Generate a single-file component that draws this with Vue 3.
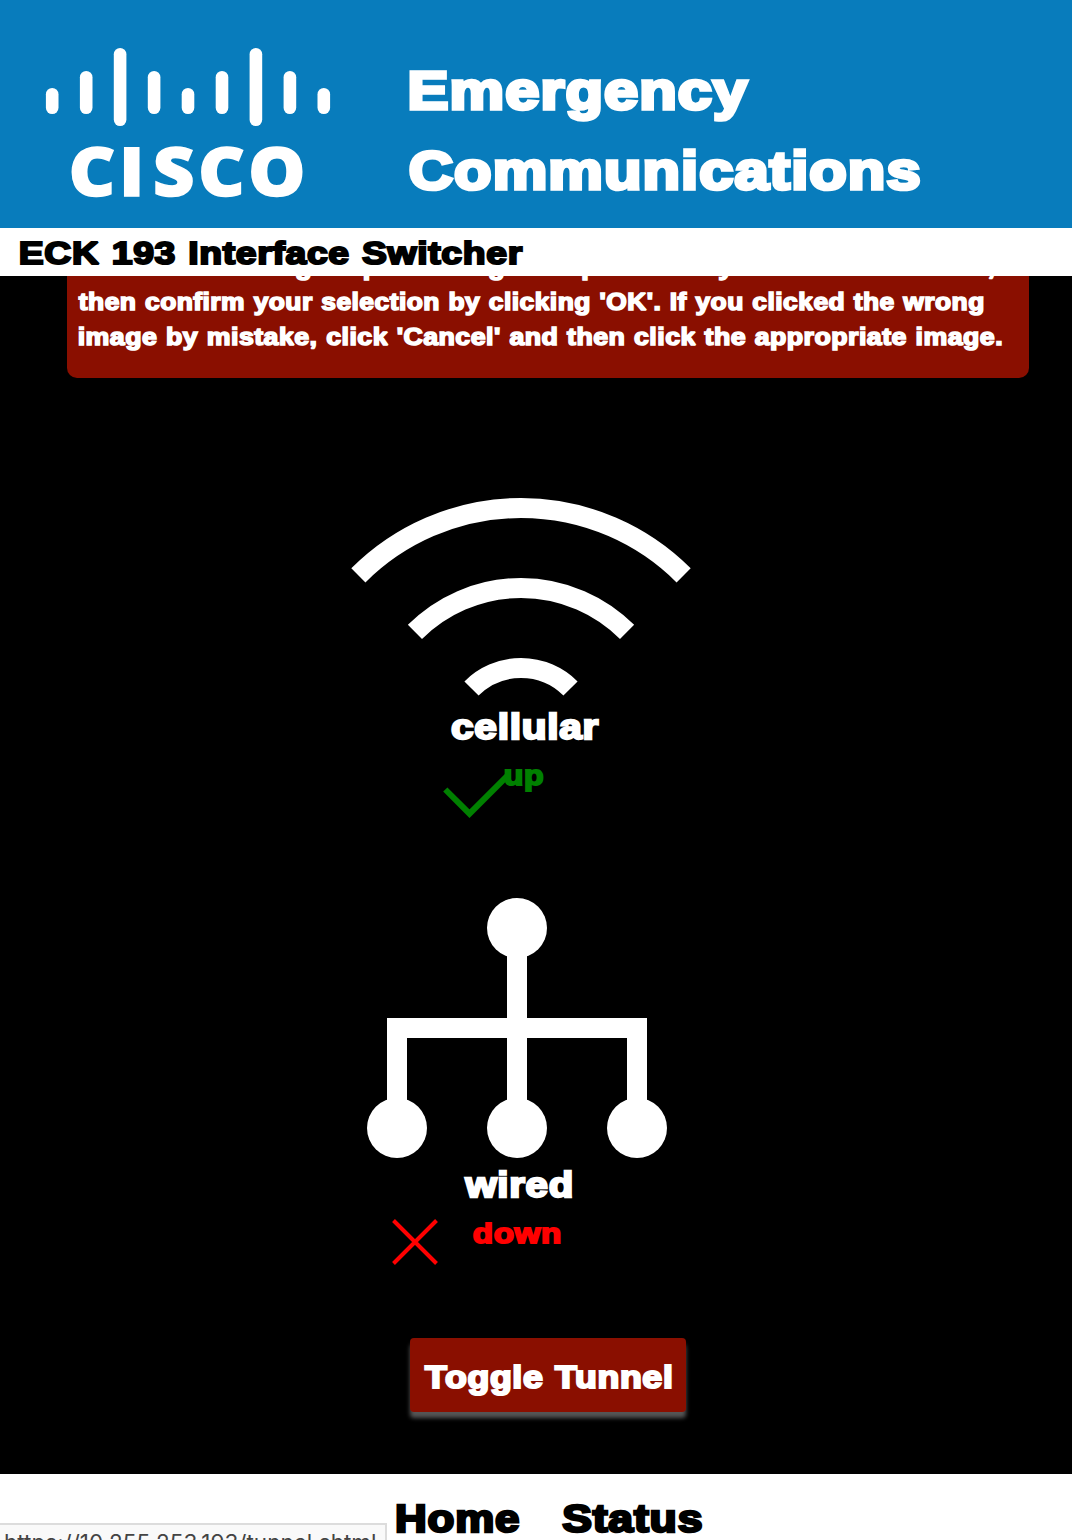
<script setup>
import { h } from 'vue'

const pen = document.createElement('canvas').getContext('2d')

// A line of extra-heavy display text, stretched so its ink spans `width` pixels.
// `size` is the nominal em, `base` the baseline inside a box `height` tall.
function HeavyText({ text, size, width, height, base }) {
  const stroke = size * 0.068
  const em = size * 0.948
  const tracking = em * 0.018
  const wordGap = em * 0.03
  pen.font = `bold ${em}px "Liberation Sans", Arial, sans-serif`
  pen.letterSpacing = `${tracking}px`
  pen.wordSpacing = `${wordGap}px`
  const m = pen.measureText(text)
  const scale = (width - stroke) / (m.actualBoundingBoxLeft + m.actualBoundingBoxRight)
  const x = stroke / 2 + m.actualBoundingBoxLeft * scale
  return h('svg', { class: 'heavy', width, height }, [
    h('text', {
      'transform': `translate(${x} ${base - stroke / 2 + 0.5}) scale(${scale} 1)`,
      'font-size': em,
      'letter-spacing': tracking,
      'word-spacing': wordGap,
      'stroke-width': stroke,
    }, text),
  ])
}
HeavyText.props = ['text', 'size', 'width', 'height', 'base']

const bars = [
  [52.2, 88, 114], [86.2, 71, 114], [120.1, 48, 126], [154.1, 71, 114], [188, 88, 114],
  [222, 71, 114], [255.9, 48, 126], [289.9, 71, 114], [323.8, 88, 114],
]
</script>

<template>
  <div class="page">
    <header class="banner">
      <svg class="logo" width="350" height="228" viewBox="0 0 350 228">
        <rect v-for="b in bars" :key="b[0]" :x="b[0] - 6.3" :y="b[1]" width="12.6" :height="b[2] - b[1]" rx="6.3" />
        <text y="196.300" x="64.200 111.400 143 185.200 232" transform="scale(1.07 1)" class="wordmark">CISCO</text>
      </svg>
      <h1>
        <HeavyText text="Emergency" :size="57" :width="340" :height="80" :base="60" />
        <HeavyText text="Communications" :size="57" :width="511" :height="80" :base="60" />
      </h1>
    </header>
    <div class="titlebar">
      <HeavyText text="ECK 193 Interface Switcher" :size="33.5" :width="503" :height="48" :base="37" />
    </div>
    <main>
      <section class="notice">
        <HeavyText text="Click on the image representing the option that you want to activate," :size="24.5" :width="916" :height="35" :base="25.5" />
        <HeavyText text="then confirm your selection by clicking 'OK'. If you clicked the wrong" :size="24.5" :width="906" :height="35" :base="25.5" />
        <HeavyText text="image by mistake, click 'Cancel' and then click the appropriate image." :size="24.5" :width="924" :height="35" :base="25.5" />
      </section>

      <section class="iface cellular">
        <svg width="340" height="200" viewBox="351 498 340 200" fill="none" stroke="#fff" stroke-width="20">
          <path d="M358.37 575.37A230 230 0 0 1 683.63 575.37" />
          <path d="M414.93 631.93A150 150 0 0 1 627.07 631.93" />
          <path d="M471.5 688.5A70 70 0 0 1 570.5 688.5" />
        </svg>
        <HeavyText class="name" text="cellular" :size="36.5" :width="148" :height="56" :base="42" />
        <div class="state up">
          <svg class="mark" width="70" height="50" viewBox="441 770 70 50" fill="none" stroke="currentColor" stroke-width="6">
            <path d="M445.3 789.5L469.5 813.7L510 773.2" />
          </svg>
          <HeavyText text="up" :size="29.5" :width="39.5" :height="44" :base="32" />
        </div>
      </section>

      <section class="iface wired">
        <svg width="300" height="260" viewBox="367 898 300 260" fill="#fff">
          <circle cx="517" cy="928" r="30" />
          <circle cx="397" cy="1128" r="30" />
          <circle cx="517" cy="1128" r="30" />
          <circle cx="637" cy="1128" r="30" />
          <path d="M507 940H527V1018H647V1120H627V1038H527V1120H507V1038H407V1120H387V1018H507Z" />
        </svg>
        <HeavyText class="name" text="wired" :size="36.5" :width="109" :height="56" :base="40" />
        <div class="state down">
          <svg class="mark" width="50" height="50" viewBox="390 1217 50 50" fill="none" stroke="currentColor" stroke-width="4">
            <path d="M393.5 1220.500L436.500 1263.500M436.500 1220.500L393.500 1263.500" />
          </svg>
          <HeavyText text="down" :size="29.5" :width="88" :height="44" :base="30" />
        </div>
      </section>

      <button class="toggle">
        <HeavyText text="Toggle Tunnel" :size="33" :width="248" :height="74" :base="50.5" />
      </button>
    </main>
    <footer>
      <HeavyText text="Home" :size="40" :width="123.500" :height="66" :base="59" />
      <HeavyText text="Status" :size="40" :width="140.500" :height="66" :base="59" />
      <div class="link-hint">https://10.255.253.193/tunnel.shtml</div>
    </footer>
  </div>
</template>

<style>
body { background: #000; }
</style>

<style scoped>
.page { width: 1072px; height: 1540px; overflow: hidden; background: #000; color: #fff; display: flex; flex-direction: column; }
.page :deep(.heavy) { display: block; overflow: visible; flex: none; }
.page :deep(.heavy text) {
  font-family: "Liberation Sans", Arial, sans-serif;
  font-weight: bold;
  fill: currentColor;
  stroke: currentColor;
  stroke-linejoin: miter;
  stroke-miterlimit: 2;
  vector-effect: non-scaling-stroke;
}
.banner { height: 228px; background: #087cbc; display: flex; flex: none; }
.logo { fill: #fff; flex: none; }
.wordmark { font: 800 67px "Open Sans", "Noto Sans", sans-serif; stroke: #fff; stroke-width: 1.5; }
h1 { margin: 50px 0 0 58.5px; }
.titlebar { height: 48px; flex: none; background: #fff; color: #000; padding-left: 19.5px; }
main { height: 1198px; flex: none; overflow: hidden; display: flex; flex-direction: column; }
.notice { box-sizing: border-box; flex: none; width: 962px; height: 137px; margin: -35px 0 0 67px; padding: 9px 10.5px; background: #8a0f00; border-radius: 10px; }
.iface { flex: none; display: flex; flex-direction: column; align-items: center; }
.iface > svg { flex: none; }
.cellular { width: 340px; margin: 120px 0 0 351px; height: 400px; }
.wired { width: 300px; height: 440px; margin-left: 367px; }
.cellular .name { margin-left: 7px; }
.state { position: relative; }
.mark { position: absolute; }
.up { color: #008000; margin-left: 6px; }
.up .mark { left: -63px; top: 16px; }
.down { color: #f00; }
.down .mark { left: -83px; top: 3px; }
.toggle { width: 276px; height: 74px; flex: none; margin-left: 410px; padding: 0 0 0 13.5px; border: 0; border-radius: 4px; background: #8a0f00; color: #fff; box-shadow: 0 6px 4px #555; }
footer { position: relative; height: 66px; flex: none; box-sizing: border-box; padding-left: 395.5px; display: flex; gap: 43px; background: #fff; color: #000; }
.link-hint { position: absolute; left: 0; top: 49px; width: 385px; height: 40px; border-top: 2px solid #dcdcdc; border-right: 2px solid #dcdcdc; background: #f9f9f9; color: #444; font: 22.5px/28px Inter, Roboto, sans-serif; padding-top: 4px; text-indent: 4px; white-space: nowrap; }
</style>
